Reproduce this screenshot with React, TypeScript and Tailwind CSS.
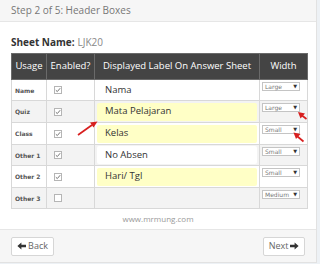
import React from "react";

type Row = {
  usage: string;
  enabled: boolean;
  label: string | null;
  yellow: boolean;
  width: string;
  h: string;
};

const rows: Row[] = [
  { usage: "Name", enabled: true, label: "Nama", yellow: false, width: "Large", h: "h-[21px]" },
  { usage: "Quiz", enabled: true, label: "Mata Pelajaran", yellow: true, width: "Large", h: "h-[22px]" },
  { usage: "Class", enabled: true, label: "Kelas", yellow: true, width: "Small", h: "h-[22px]" },
  { usage: "Other 1", enabled: true, label: "No Absen", yellow: false, width: "Small", h: "h-[21px]" },
  { usage: "Other 2", enabled: true, label: "Hari/ Tgl", yellow: true, width: "Small", h: "h-[22px]" },
  { usage: "Other 3", enabled: false, label: null, yellow: false, width: "Medium", h: "h-[21px]" },
];

function Check({ on }: { on: boolean }) {
  return (
    <span className="flex h-[8px] w-[8px] items-center justify-center border border-[#b5b5b5] bg-white">
      {on && (
        <svg width="6" height="6" viewBox="0 0 6 6">
          <path d="M0.8 3.2 L2.3 4.6 L5.2 1.2" fill="none" stroke="#666" strokeWidth="0.9" />
        </svg>
      )}
    </span>
  );
}

function ArrowIcon({ dir }: { dir: "left" | "right" }) {
  return (
    <svg width="9" height="8" viewBox="0 0 9 8" className={dir === "right" ? "" : "rotate-180"}>
      <path d="M0 2.8 H4.6 V0.4 L8.6 4 L4.6 7.6 V5.2 H0 Z" fill="#333" />
    </svg>
  );
}

export default function App() {
  return (
    <div
      className="relative h-[264px] w-[320px] overflow-hidden bg-[#edf1f5]"
      style={{ fontFamily: '"Open Sans", "Liberation Sans", sans-serif' }}
    >
      <div className="w-[317px] border-r border-b border-[#e2e2e2] bg-white">
        <div className="flex h-[22px] items-center border-b border-[#e6e6e6] bg-[#f6f6f6] pl-[11px] text-[10px] text-[#777]">
          Step 2 of 5: Header Boxes
        </div>

        <div className="px-[11px]">
          <div className="flex h-[31px] items-end pb-[3px] text-[10px]">
            <span className="font-bold text-[#333]">Sheet Name:</span>
            <span className="ml-[3px] text-[#888]">LJK20</span>
          </div>

          <table className="w-[296px] table-fixed border-collapse">
            <colgroup>
              <col className="w-[35px]" />
              <col className="w-[48px]" />
              <col className="w-[165px]" />
              <col className="w-[48px]" />
            </colgroup>
            <thead>
              <tr className="h-[26px] bg-[#444] text-[9.5px] text-white">
                <th className="border border-[#6a6a6a] font-normal">Usage</th>
                <th className="border border-[#6a6a6a] font-normal">Enabled?</th>
                <th className="border border-[#6a6a6a] font-normal">Displayed Label On Answer Sheet</th>
                <th className="border border-[#6a6a6a] font-normal">Width</th>
              </tr>
            </thead>
            <tbody>
              {rows.map((r, i) => (
                <tr key={r.usage} className={`${r.h} ${i % 2 === 1 ? "bg-[#f3f3f3]" : "bg-white"}`}>
                  <td
                    className="border border-[#d8d8d8] pl-[3px] align-middle text-[6px] font-bold text-[#555]"
                    style={{ fontFamily: '"DejaVu Sans", Verdana, sans-serif' }}
                  >
                    {r.usage}
                  </td>
                  <td className="border border-[#d8d8d8] pl-[7px] align-middle">
                    <Check on={r.enabled} />
                  </td>
                  <td className="border border-[#d8d8d8] px-[2px] align-middle">
                    {r.label !== null && (
                      <div
                        className={`flex h-[18px] items-center rounded-[2px] pl-[8px] text-[9.5px] text-[#333] ${
                          r.yellow ? "bg-[#ffffc6]" : "bg-white"
                        }`}
                      >
                        {r.label}
                      </div>
                    )}
                  </td>
                  <td className="border border-[#d8d8d8] px-[2px] pt-[2px] align-top">
                    <div
                      className="flex h-[9px] w-[38px] items-center justify-between border border-[#c4c4c4] bg-white px-[2px] text-[6px] leading-none text-[#777]"
                      style={{ fontFamily: '"DejaVu Sans", Verdana, sans-serif' }}
                    >
                      <span>{r.width}</span>
                      <span className="text-[5px] text-[#333]">▼</span>
                    </div>
                  </td>
                </tr>
              ))}
            </tbody>
          </table>

          <div className="flex h-[20px] items-center justify-center text-[8px] text-[#999]">www.mrmung.com</div>
        </div>

        <div className="flex h-[33px] items-center justify-between border-t border-[#e6e6e6] bg-[#f6f6f6] px-[11px]">
          <button className="flex h-[19px] w-[43px] items-center justify-center gap-[2px] rounded-[2px] border border-[#d6d6d6] bg-white text-[9px] text-[#666]">
            <ArrowIcon dir="left" />
            Back
          </button>
          <button className="flex h-[19px] w-[42px] items-center justify-center gap-[2px] rounded-[2px] border border-[#d6d6d6] bg-white text-[9px] text-[#666]">
            Next
            <ArrowIcon dir="right" />
          </button>
        </div>
      </div>

      <svg className="pointer-events-none absolute left-0 top-0" width="320" height="264">
        <g stroke="#d81f1f" strokeWidth="1.7" fill="#d81f1f">
          <line x1="78" y1="135" x2="92" y2="125" />
          <polygon points="97.5,121.5 90,122.5 93.5,127.5" stroke="none" />
          <line x1="306.5" y1="119" x2="302" y2="115.5" />
          <polygon points="298,112 305,113.5 300.5,118.5" stroke="none" />
          <line x1="303.5" y1="141.5" x2="297.5" y2="136.5" />
          <polygon points="293.5,132.5 300.5,134 296,139" stroke="none" />
        </g>
      </svg>
    </div>
  );
}
